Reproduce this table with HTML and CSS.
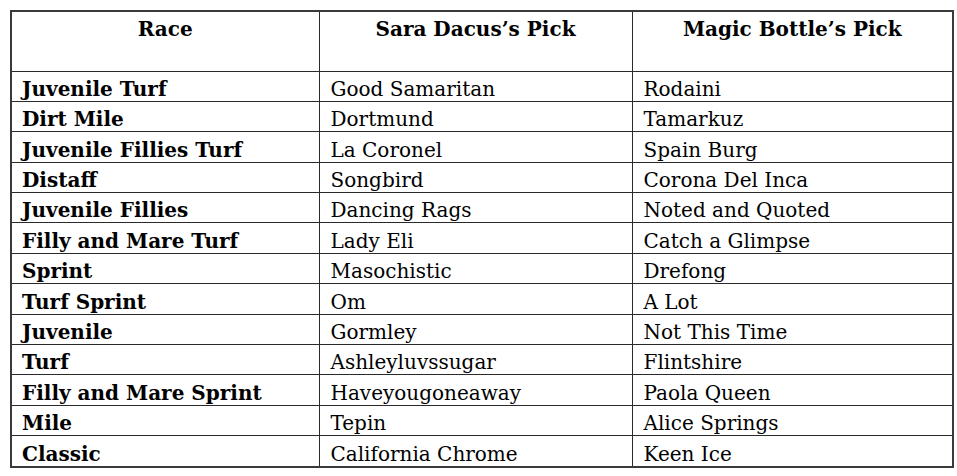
FILE: index.html
```html
<!DOCTYPE html>
<html>
<head>
<meta charset="utf-8">
<link rel="stylesheet" href="styles.css">
</head>
<body>
<table class="picks">
  <colgroup>
    <col class="c1"><col class="c2"><col class="c3">
  </colgroup>
  <thead>
    <tr><th>Race</th><th>Sara Dacus’s Pick</th><th>Magic Bottle’s Pick</th></tr>
  </thead>
  <tbody>
    <tr><td class="race">Juvenile Turf</td><td>Good Samaritan</td><td>Rodaini</td></tr>
    <tr><td class="race">Dirt Mile</td><td>Dortmund</td><td>Tamarkuz</td></tr>
    <tr><td class="race">Juvenile Fillies Turf</td><td>La Coronel</td><td>Spain Burg</td></tr>
    <tr><td class="race">Distaff</td><td>Songbird</td><td>Corona Del Inca</td></tr>
    <tr><td class="race">Juvenile Fillies</td><td>Dancing Rags</td><td>Noted and Quoted</td></tr>
    <tr><td class="race">Filly and Mare Turf</td><td>Lady Eli</td><td>Catch a Glimpse</td></tr>
    <tr><td class="race">Sprint</td><td>Masochistic</td><td>Drefong</td></tr>
    <tr><td class="race">Turf Sprint</td><td>Om</td><td>A Lot</td></tr>
    <tr><td class="race">Juvenile</td><td>Gormley</td><td>Not This Time</td></tr>
    <tr><td class="race">Turf</td><td>Ashleyluvssugar</td><td>Flintshire</td></tr>
    <tr><td class="race">Filly and Mare Sprint</td><td>Haveyougoneaway</td><td>Paola Queen</td></tr>
    <tr><td class="race">Mile</td><td>Tepin</td><td>Alice Springs</td></tr>
    <tr><td class="race">Classic</td><td>California Chrome</td><td>Keen Ice</td></tr>
  </tbody>
</table>
</body>
</html>
```

FILE: styles.css
```css
html, body {
  margin: 0;
  background: #ffffff;
}
body {
  padding: 10px 0 0 10px;
  font-family: "DejaVu Serif", "Liberation Serif", serif;
  color: #000;
}
.picks {
  border-collapse: collapse;
  table-layout: fixed;
  width: 942px;
  border: 2px solid #3a3a3a;
}
.c1 { width: 308px; }
.c2 { width: 313px; }
.c3 { width: 321px; }
.picks th, .picks td {
  border: 1px solid #2a2a2a;
  padding: 0 11px;
  font-size: 20px;
  line-height: 24px;
}
.picks th {
  height: 60px;
  vertical-align: top;
  text-align: center;
  font-weight: bold;
  padding-top: 5px;
  box-sizing: border-box;
}
.picks td {
  height: 29.4px;
  vertical-align: bottom;
  text-align: left;
  white-space: nowrap;
}
.picks td.race {
  font-weight: bold;
  padding-left: 10px;
}
```
